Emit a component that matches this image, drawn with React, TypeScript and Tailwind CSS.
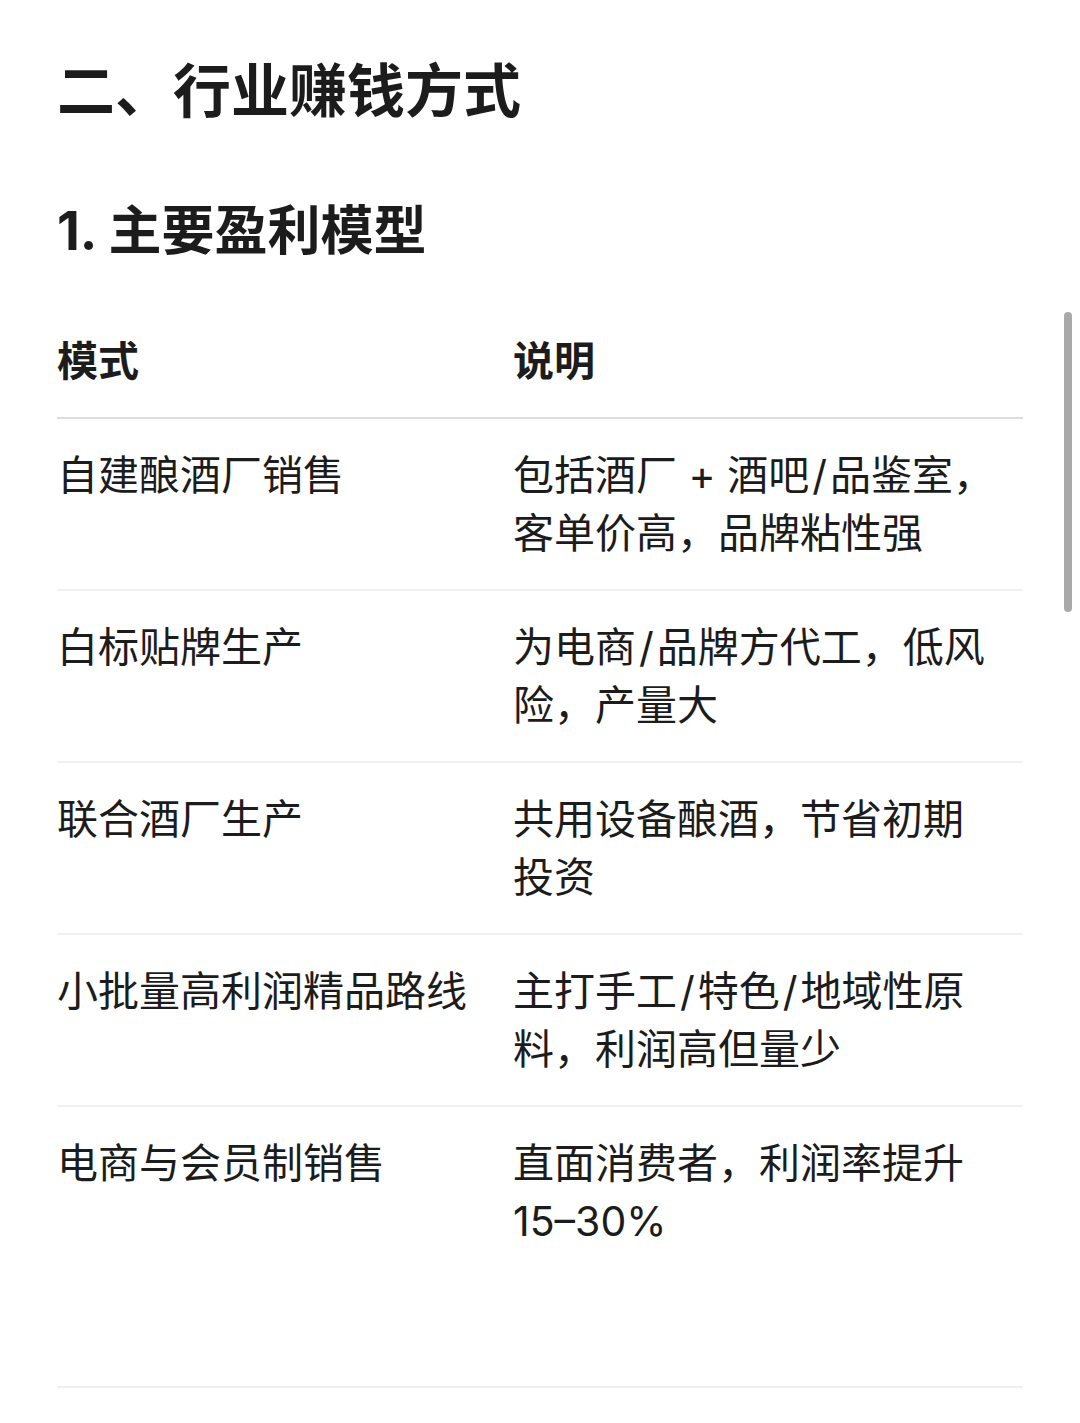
import React from "react";

const rows: [string, string][] = [
  ["自建酿酒厂销售", "包括酒厂 + 酒吧/品鉴室，客单价高，品牌粘性强"],
  ["白标贴牌生产", "为电商/品牌方代工，低风险，产量大"],
  ["联合酒厂生产", "共用设备酿酒，节省初期投资"],
  ["小批量高利润精品路线", "主打手工/特色/地域性原料，利润高但量少"],
  ["电商与会员制销售", "直面消费者，利润率提升 15–30%"],
];

function Desc({ text }: { text: string }) {
  const parts = text.split("/");
  return (
    <>
      {parts.map((p, i) => (
        <React.Fragment key={i}>
          {i > 0 ? <span className="px-[3px]">/</span> : null}
          {p}
        </React.Fragment>
      ))}
    </>
  );
}

export default function App() {
  return (
    <div
      className="relative w-[1080px] h-[1423px] bg-white overflow-hidden text-[#1c1c1c]"
      style={{ fontFamily: "Inter, 'Noto Sans CJK SC', sans-serif" }}
    >
      <div className="pt-[51px] pl-[57px] pr-[57px]">
        <h1 className="text-[58px] leading-[80px] font-bold">二、行业赚钱方式</h1>
        <h2 className="mt-[64px] text-[53px] leading-[72px] font-bold">1. 主要盈利模型</h2>
        <div className="mt-[38px] w-[966px]">
          <div className="flex border-b-2 border-[#dddddd] pt-[27px] pb-[27px]">
            <div className="w-[456px] text-[41px] leading-[58px] font-bold">模式</div>
            <div className="w-[488px] text-[41px] leading-[58px] font-bold">说明</div>
          </div>
          {rows.map(([a, b], i) => (
            <div
              key={i}
              className={
                i === rows.length - 1
                  ? "flex border-b-2 border-[#f0f0f0] pt-[27px] pb-[136px]"
                  : "flex border-b-2 border-[#f0f0f0] pt-[27px] pb-[27px]"
              }
            >
              <div className="w-[456px] text-[41px] leading-[58px] pr-[10px]">{a}</div>
              <div className="w-[488px] text-[41px] leading-[58px]">
                <Desc text={b} />
              </div>
            </div>
          ))}
        </div>
      </div>
      <div className="absolute left-[1064px] top-[312px] w-[8px] h-[300px] rounded-full bg-[#a9a9a9]" />
    </div>
  );
}
